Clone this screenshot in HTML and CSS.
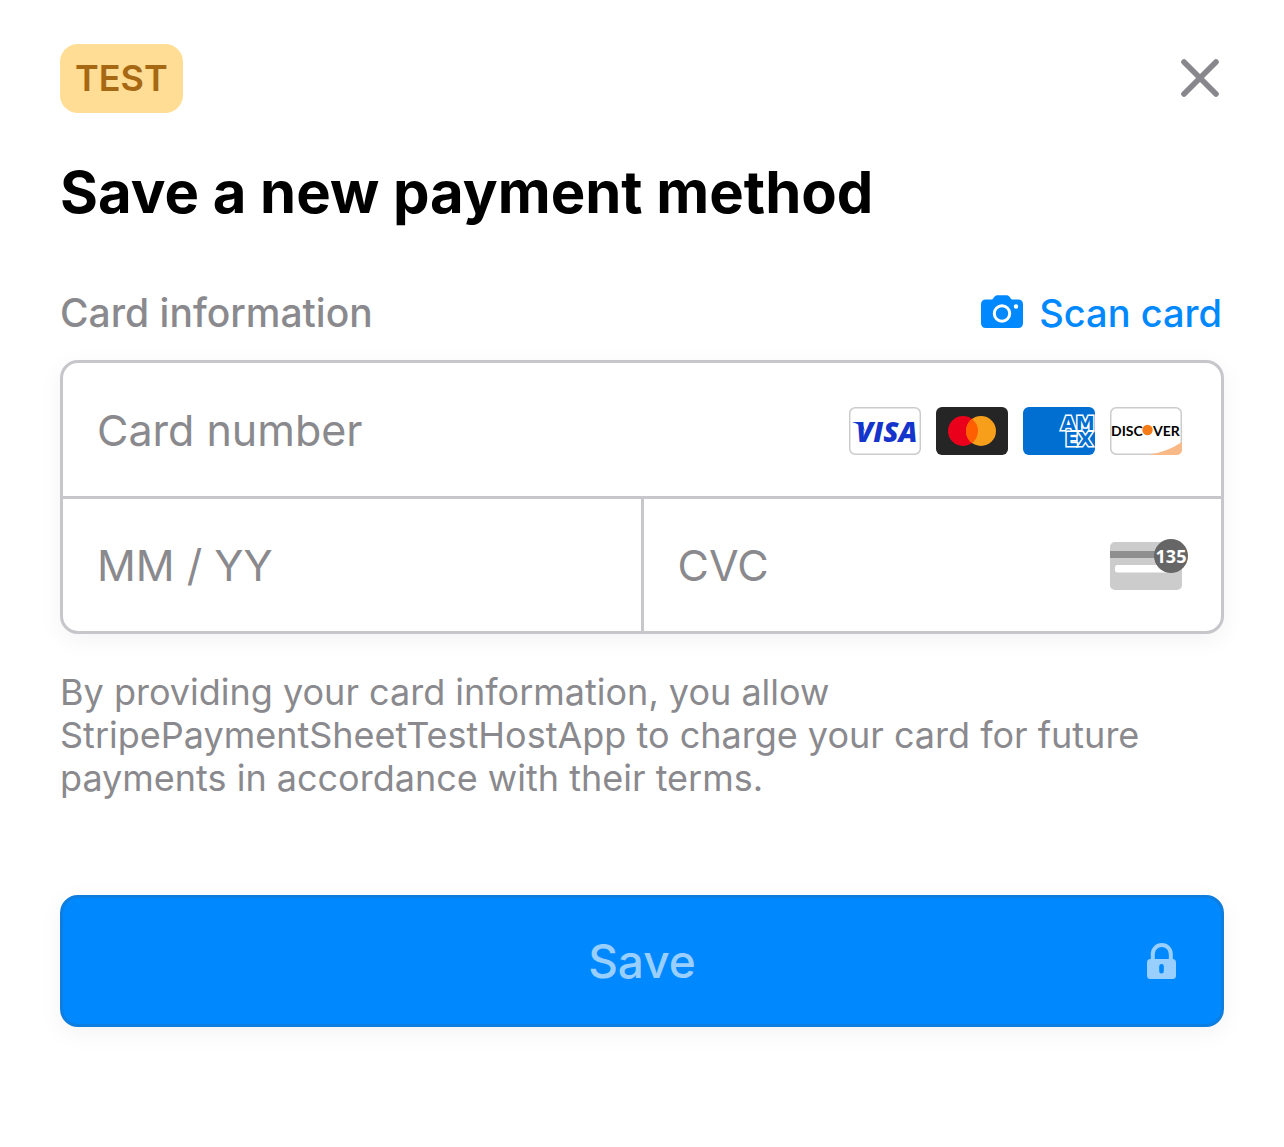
FILE: index.html
```html
<!DOCTYPE html>
<html lang="en">
<head>
<meta charset="utf-8">
<meta name="viewport" content="width=device-width, initial-scale=1">
<title>Save a new payment method</title>
<link rel="stylesheet" href="styles.css">
</head>
<body>
<main class="sheet">
  <header class="topbar">
    <span class="badge">TEST</span>
    <button class="close" type="button" aria-label="Close">
      <svg width="40" height="41" viewBox="0 0 40 41" aria-hidden="true"><path d="M4 4 36 36M36 4 4 36" fill="none" stroke="#88888c" stroke-width="5.6" stroke-linecap="round"/></svg>
    </button>
  </header>
  <h1 class="title">Save a new payment method</h1>
  <form class="form">
    <div class="section-head">
      <h2 class="section-label">Card information</h2>
      <button class="scan" type="button">
        <svg width="42" height="36" viewBox="0 0 42 36" aria-hidden="true">
          <path fill="#08f" fill-rule="evenodd" d="M5 4.500h6c1.500 0 2.300-4.200 5-4.200h10c2.700 0 3.500 4.200 5 4.200h6q5 0 5 5V28q0 5-5 5H5q-5 0-5-5V9.500q0-5 5-5ZM21 9.300a9.200 9.200 0 1 0 0 18.400a9.200 9.200 0 1 0 0-18.400Zm0 3a6.200 6.200 0 1 1 0 12.400a6.200 6.200 0 1 1 0-12.400ZM35 9.300a2.200 2.200 0 1 0 0 4.400a2.200 2.200 0 1 0 0-4.400Z"/>
        </svg>
        <span>Scan card</span>
      </button>
    </div>
    <div class="fields">
      <div class="field field-number">
        <input class="input" type="text" inputmode="numeric" placeholder="Card number" aria-label="Card number">
        <div class="card-art">
          <svg width="72" height="48" viewBox="0 0 72 48" role="img" aria-label="Visa">
            <rect x=".75" y=".75" width="70.500" height="46.500" rx="5.500" fill="#fff" stroke="#ccc" stroke-width="1.500"/>
            <path d="M3 15.300q6-.6 10 0l3 9q-4-7-13-9Z" fill="#1434cb"/>
            <text x="7" y="34.700" class="visa">VISA</text>
          </svg>
          <svg width="72" height="48" viewBox="0 0 72 48" role="img" aria-label="Mastercard">
            <rect width="72" height="48" rx="6" fill="#252525"/>
            <circle cx="27" cy="24" r="15" fill="#eb001b"/>
            <circle cx="45" cy="24" r="15" fill="#f79e1b"/>
            <path d="M36 12a15 15 0 0 1 0 24a15 15 0 0 1 0-24Z" fill="#ff5f00"/>
          </svg>
          <svg width="72" height="48" viewBox="0 0 72 48" role="img" aria-label="American Express">
            <rect width="72" height="48" rx="6" fill="#006fd1"/>
            <text class="amex"><tspan x="38" y="22.500">AM</tspan><tspan x="42" y="38.500">EX</tspan></text>
          </svg>
          <svg width="72" height="48" viewBox="0 0 72 48" role="img" aria-label="Discover">
            <rect x=".75" y=".75" width="70.500" height="46.500" rx="5.500" fill="#fff" stroke="#ccc" stroke-width="1.500"/>
            <path d="M38 48Q57 45 72 35v7q0 6-6 6Z" fill="#f9b987"/>
            <text x="1" y="28.500" class="discover">DISC</text>
            <text x="43" y="28.500" class="discover">VER</text>
            <circle cx="37.500" cy="23" r="5.200" fill="#f47b16"/>
          </svg>
        </div>
      </div>
      <div class="field">
        <input class="input" type="text" inputmode="numeric" placeholder="MM / YY" aria-label="Expiration date">
      </div>
      <div class="field">
        <input class="input" type="text" inputmode="numeric" placeholder="CVC" aria-label="CVC">
        <div class="card-art">
          <svg class="cvc-icon" width="72" height="48" viewBox="0 0 72 48" aria-hidden="true">
            <rect width="72" height="48" rx="5" fill="#ccc"/>
            <path d="M0 9h72v7H0Z" fill="#8f8f8f"/>
            <rect x="5" y="23" width="62" height="7.500" rx="2.500" fill="#fff"/>
            <circle cx="61" cy="14" r="17" fill="#666"/>
            <text x="61" y="21" class="cvc-digits">135</text>
          </svg>
        </div>
      </div>
    </div>
    <p class="terms">By providing your card information, you allow StripePaymentSheetTestHostApp to charge your card for future payments in accordance with their terms.</p>
    <button class="save" type="submit" disabled>
      <span>Save</span>
      <svg class="lock" width="30" height="36" viewBox="0 0 30 36" aria-hidden="true">
        <path d="M5.800 17V11a9 9 0 0 1 18 0v6" fill="none" stroke="#99cfff" stroke-width="4"/>
        <path fill="#99cfff" fill-rule="evenodd" d="M3.500 16h22q3.500 0 3.500 3.500v13q0 3.500-3.500 3.500h-22Q0 36 0 32.500v-13Q0 16 3.500 16Zm11 5q-2.300 0-2.300 2.300v4.900q0 2.300 2.300 2.300t2.300-2.300v-4.900Q16.800 21 14.500 21Z"/>
      </svg>
    </button>
  </form>
</main>
</body>
</html>
```

FILE: styles.css
```css
* { box-sizing: border-box; }

body {
  margin: 0;
  background: #fff;
  color: #000;
  font-family: Inter, "Liberation Sans", sans-serif;
}

button, input { font: inherit; color: inherit; }

button {
  padding: 0;
  border: 0;
  background: none;
}

.sheet { padding: 44px 60px 120px; }

.topbar {
  display: flex;
  align-items: center;
  justify-content: space-between;
}

.badge {
  padding: 12px 15px;
  border-radius: 18px;
  background: #ffdd94;
  color: #a76813;
  font-size: 36px;
  font-weight: 600;
  line-height: 45px;
}

.close {
  display: flex;
  padding-right: 4px;
}

.title {
  margin: 43px 0 0;
  font-size: 58px;
  font-weight: 700;
  line-height: 72px;
}

.section-head {
  display: flex;
  align-items: center;
  justify-content: space-between;
  margin: 61px 0 23px;
  font-size: 39px;
  font-weight: 500;
  line-height: 48px;
}

.section-label {
  margin: 0;
  color: #8a8a8e;
  font-size: inherit;
  font-weight: inherit;
}

.scan {
  display: flex;
  align-items: center;
  gap: 16px;
  padding-right: 2px;
  color: #08f;
  font-size: 38px;
}

.fields {
  display: grid;
  grid-template-columns: 1fr 1fr;
  gap: 3px;
  overflow: hidden;
  border: 3px solid #c6c6cb;
  border-radius: 18px;
  background: #c6c6cb;
  box-shadow: 0 6px 24px rgba(0, 0, 0, 0.05);
}

.field {
  display: flex;
  align-items: center;
  min-width: 0;
  height: 132px;
  padding: 0 39px 0 34px;
  background: #fff;
}

.field-number {
  grid-column: 1 / -1;
  height: 133px;
}

.input {
  flex: 1;
  min-width: 0;
  padding: 0;
  border: 0;
  outline: 0;
  background: none;
  font-size: 43px;
  line-height: 54px;
}

.input::placeholder {
  color: #8a8a8e;
  opacity: 1;
}

.card-art {
  display: flex;
  gap: 15px;
  padding-top: 2px;
}

.visa {
  fill: #1434cb;
  font: italic 800 28px "Open Sans", sans-serif;
}

.amex {
  fill: #006fd1;
  stroke: #fff;
  stroke-width: 3px;
  paint-order: stroke;
  font: 700 19px "DejaVu Sans", sans-serif;
}

.discover {
  fill: #000;
  font: 700 14px Lato, sans-serif;
}

.cvc-icon { overflow: visible; }

.cvc-digits {
  fill: #fff;
  font: 700 18px "Noto Sans", sans-serif;
  text-anchor: middle;
}

.terms {
  margin: 37px 0 0;
  color: #8a8a8e;
  font-size: 36px;
  line-height: 43px;
}

.save {
  position: relative;
  display: block;
  width: 100%;
  height: 132px;
  margin-top: 95px;
  border: 3px solid #0d7de0;
  border-radius: 18px;
  background: #08f;
  box-shadow: 0 6px 24px rgba(0, 0, 0, 0.05);
  color: #99cfff;
  font-size: 46px;
  font-weight: 500;
}

.lock {
  position: absolute;
  top: 45px;
  right: 44px;
}
```
